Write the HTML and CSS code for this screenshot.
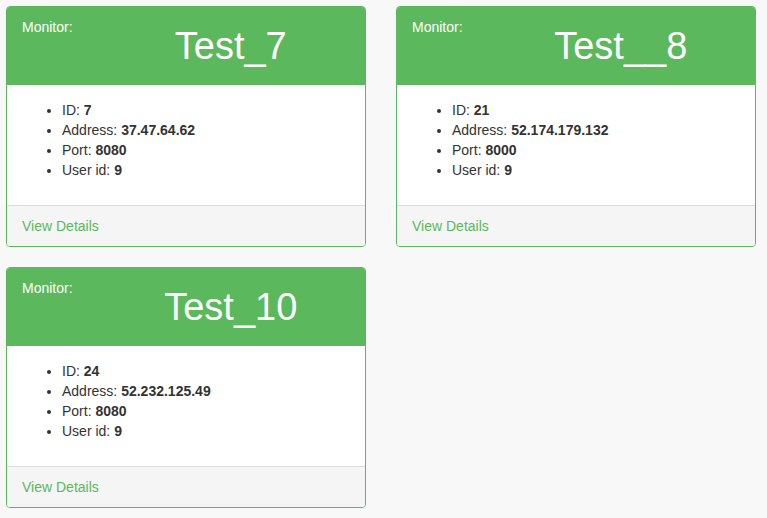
FILE: index.html
```html
<!DOCTYPE html>
<html>
<head>
<meta charset="utf-8">
<link rel="stylesheet" href="styles.css">
</head>
<body>
<div class="grid">
  <div class="panel">
    <div class="panel-heading">
      <div class="label-col">Monitor:</div>
      <div class="title-col"><div class="huge">Test_7</div></div>
    </div>
    <div class="panel-body">
      <ul>
        <li>ID: <b>7</b></li>
        <li>Address: <b>37.47.64.62</b></li>
        <li>Port: <b>8080</b></li>
        <li>User id: <b>9</b></li>
      </ul>
    </div>
    <div class="panel-footer"><a href="#">View Details</a></div>
  </div>
  <div class="panel">
    <div class="panel-heading">
      <div class="label-col">Monitor:</div>
      <div class="title-col"><div class="huge">Test__8</div></div>
    </div>
    <div class="panel-body">
      <ul>
        <li>ID: <b>21</b></li>
        <li>Address: <b>52.174.179.132</b></li>
        <li>Port: <b>8000</b></li>
        <li>User id: <b>9</b></li>
      </ul>
    </div>
    <div class="panel-footer"><a href="#">View Details</a></div>
  </div>
  <div class="panel">
    <div class="panel-heading">
      <div class="label-col">Monitor:</div>
      <div class="title-col"><div class="huge">Test_10</div></div>
    </div>
    <div class="panel-body">
      <ul>
        <li>ID: <b>24</b></li>
        <li>Address: <b>52.232.125.49</b></li>
        <li>Port: <b>8080</b></li>
        <li>User id: <b>9</b></li>
      </ul>
    </div>
    <div class="panel-footer"><a href="#">View Details</a></div>
  </div>
</div>
</body>
</html>
```

FILE: styles.css
```css
html, body {
  margin: 0;
  padding: 0;
  background: #f8f8f8;
  font-family: "Liberation Sans", Arial, Helvetica, sans-serif;
  font-size: 14px;
  line-height: 20px;
  color: #333;
}
.grid {
  display: grid;
  grid-template-columns: 360px 360px;
  column-gap: 30px;
  row-gap: 20px;
  padding: 6px 0 0 6px;
}
.panel {
  background: #fff;
  border: 1px solid #5cb85c;
  border-radius: 4px;
  overflow: hidden;
}
.panel-heading {
  background: #5cb85c;
  color: #fff;
  padding: 10px 15px;
  height: 58px;
  display: flex;
}
.label-col {
  width: 74.5px;
  flex: none;
}
.title-col {
  flex: 1;
  padding-left: 15px;
  text-align: center;
}
.huge {
  font-size: 38px;
  line-height: 44px;
  margin-top: 7px;
}
.panel-body {
  padding: 15px;
}
.panel-body ul {
  margin: 0 0 10px 0;
  padding-left: 40px;
}
.panel-footer {
  background: #f5f5f5;
  border-top: 1px solid #ddd;
  padding: 10px 15px;
}
.panel-footer a {
  color: #5cb85c;
  text-decoration: none;
}
```
